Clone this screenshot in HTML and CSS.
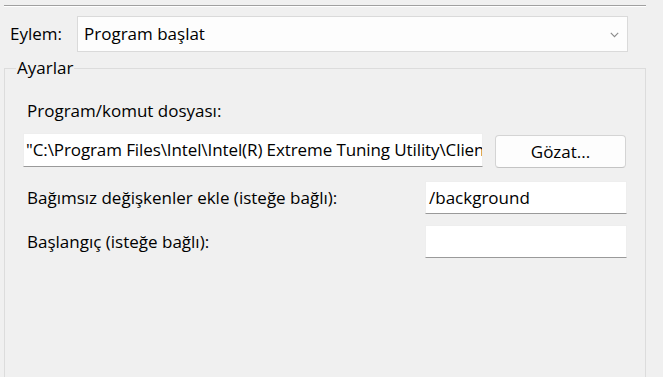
FILE: index.html
```html
<!DOCTYPE html>
<html lang="tr">
<head>
<meta charset="utf-8">
<title>Eylem</title>
<link rel="stylesheet" href="styles.css">
</head>
<body>
<div class="topbar"></div>
<div class="action">
  <span class="action-label">Eylem:</span>
  <div class="combo">
    <span class="combo-text">Program başlat</span>
    <svg class="chev" width="9" height="6" viewBox="0 0 9 6"><path d="M0.8 0.8 L4.5 4.6 L8.2 0.8" fill="none" stroke="#8a8a8a" stroke-width="1.1"/></svg>
  </div>
</div>
<fieldset class="group">
  <legend class="legend">Ayarlar</legend>
  <div class="lbl first">Program/komut dosyası:</div>
  <div class="prog-row">
    <div class="tb wide"><span class="tb-text path">"C:\Program Files\Intel\Intel(R) Extreme Tuning Utility\Clien</span></div>
    <div class="btn">Gözat...</div>
  </div>
  <div class="opt-row">
    <div class="lbl">Bağımsız değişkenler ekle (isteğe bağlı):</div>
    <div class="tb narrow"><span class="tb-text">/background</span></div>
  </div>
  <div class="opt-row second">
    <div class="lbl">Başlangıç (isteğe bağlı):</div>
    <div class="tb narrow"></div>
  </div>
</fieldset>
</body>
</html>
```
FILE: styles.css
```css
html, body {
  margin: 0;
  padding: 0;
  background: #f0f0f0;
  height: 100%;
  overflow: hidden;
}
body {
  font-family: "Open Sans", "Noto Sans", sans-serif;
  font-size: 17px;
  color: #000;
  display: flex;
  flex-direction: column;
}
.topbar {
  flex: none;
  height: 1px;
  background: #a0a0a0;
  border-bottom: 1px solid #ffffff;
  margin: 5px 17px 0 4px;
}
.action {
  flex: none;
  display: flex;
  align-items: center;
  margin-top: 9px;
  padding-left: 10px;
}
.action-label {
  width: 67px;
  line-height: 22px;
}
.combo {
  box-sizing: border-box;
  width: 551px;
  height: 36px;
  background: #fdfdfd;
  border: 1px solid #dadada;
  display: flex;
  align-items: center;
  justify-content: space-between;
  padding: 0 8px 0 6px;
}
.combo-text {
  line-height: 22px;
}
.chev {
  display: block;
  margin-top: 1px;
}
.group {
  flex: 1;
  margin: 5px 17px 0 4px;
  border: 1px solid #dcdcdc;
  border-bottom: none;
  padding: 0 18px 0 18px;
  min-width: 0;
  min-height: 0;
}
.legend {
  padding: 0 1px;
  margin-left: -7px;
  line-height: 22px;
}
.lbl {
  line-height: 22px;
  padding-left: 4px;
}
.first {
  margin-top: 21px;
}
.prog-row {
  display: flex;
  align-items: flex-start;
  margin-top: 11px;
}
.tb {
  box-sizing: border-box;
  background: #ffffff;
  border: 1px solid #eeeeee;
  border-bottom-color: #9a9a9a;
  overflow: hidden;
  white-space: nowrap;
  display: flex;
  align-items: center;
}
.wide {
  width: 460px;
  height: 34px;
}
.tb-text {
  padding-left: 3px;
  line-height: 22px;
}
.path {
  padding-left: 2px;
  letter-spacing: -0.1px;
}
.btn {
  box-sizing: border-box;
  margin-left: 12px;
  margin-top: 2px;
  width: 131px;
  height: 33px;
  background: #fdfdfd;
  border: 1px solid #d4d4d4;
  border-bottom-color: #c4c4c4;
  border-radius: 4px;
  display: flex;
  align-items: center;
  justify-content: center;
  line-height: 22px;
}
.opt-row {
  display: flex;
  align-items: center;
  justify-content: space-between;
  margin-top: 13px;
}
.opt-row.second {
  margin-top: 11px;
}
.narrow {
  width: 202px;
  height: 33px;
}
```
